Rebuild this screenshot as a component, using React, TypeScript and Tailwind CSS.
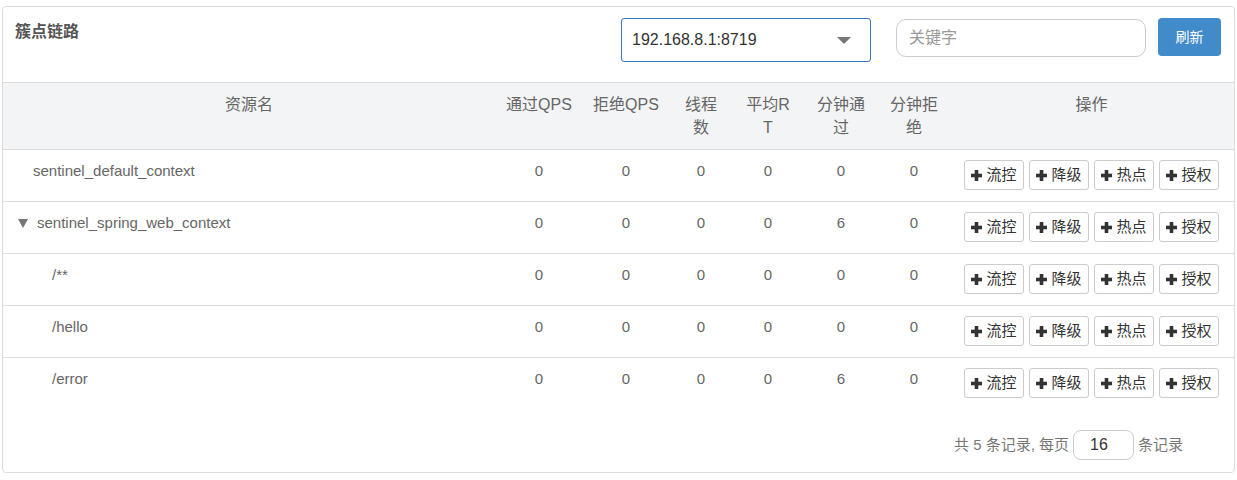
import React from 'react';

const font = { fontFamily: '"Liberation Sans", "Noto Sans CJK SC", sans-serif' };

const cols = 'grid grid-cols-[492px_88px_86px_64px_70px_76px_70px_1fr]';

type Node = {
  name: string;
  level: number;
  expandable?: boolean;
  stats: number[];
};

const rows: Node[] = [
  { name: 'sentinel_default_context', level: 0, stats: [0, 0, 0, 0, 0, 0] },
  { name: 'sentinel_spring_web_context', level: 0, expandable: true, stats: [0, 0, 0, 0, 6, 0] },
  { name: '/**', level: 1, stats: [0, 0, 0, 0, 0, 0] },
  { name: '/hello', level: 1, stats: [0, 0, 0, 0, 0, 0] },
  { name: '/error', level: 1, stats: [0, 0, 0, 0, 6, 0] },
];

const Plus = () => (
  <svg width="11" height="11" viewBox="0 0 11 11" className="shrink-0">
    <rect x="3.7" y="0" width="3.6" height="11" fill="#333" />
    <rect x="0" y="3.7" width="11" height="3.6" fill="#333" />
  </svg>
);

const ActionButton = ({ label }: { label: string }) => (
  <button className="flex h-[30px] w-[60px] items-center justify-center gap-[4px] rounded-[3px] border border-[#ccc] bg-white text-[15px] text-[#333]">
    <Plus />
    <span>{label}</span>
  </button>
);

const App = () => {
  return (
    <div className="min-h-[480px] bg-white pt-[6px]" style={font}>
      <div className="mx-[2px] rounded-[4px] border border-[#ddd] bg-white">
        {/* Toolbar */}
        <div className="flex h-[75px] items-start pl-[12px] pr-[13px]">
          <div className="mt-[14px] text-[16px] leading-[22px] font-semibold text-[#555]">簇点链路</div>
          <div className="ml-auto flex items-start">
            <div className="mt-[11px] flex h-[44px] w-[250px] items-center justify-between rounded-[3px] border border-[#3b7bc2] pl-[10px] pr-[19px] text-[16px] text-[#333]">
              <span>192.168.8.1:8719</span>
              <span className="h-0 w-0 border-x-[7px] border-t-[7px] border-x-transparent border-t-[#777]" />
            </div>
            <div className="ml-[25px] mt-[12px] flex h-[38px] w-[250px] items-center rounded-[10px] border border-[#ccc] pl-[12px] text-[16px] text-[#999]">
              关键字
            </div>
            <button className="ml-[12px] mt-[11px] h-[38px] w-[63px] rounded-[4px] bg-[#428bca] text-[14px] text-white">
              刷新
            </button>
          </div>
        </div>

        {/* Table header */}
        <div className={`${cols} border-y border-[#ddd] bg-[#f3f4f6] py-[10px] text-center text-[16px] leading-[23px] text-[#666]`}>
          <div>资源名</div>
          <div>通过QPS</div>
          <div>拒绝QPS</div>
          <div>线程<br />数</div>
          <div>平均R<br />T</div>
          <div>分钟通<br />过</div>
          <div>分钟拒<br />绝</div>
          <div>操作</div>
        </div>

        {/* Rows */}
        {rows.map((row, i) => (
          <div
            key={row.name}
            className={`${cols} text-[15px] leading-[22px] text-[#666] ${i > 0 ? 'border-t border-[#ddd]' : ''}`}
          >
            <div
              className={`flex items-start pt-[10px] pb-[11px] ${
                row.level === 1 ? 'pl-[49px]' : row.expandable ? 'pl-[15px]' : 'pl-[30px]'
              }`}
            >
              {row.expandable && (
                <span className="mr-[9px] mt-[7px] h-0 w-0 border-x-[5.5px] border-t-[9px] border-x-transparent border-t-[#777]" />
              )}
              <span>{row.name}</span>
            </div>
            {row.stats.map((s, j) => (
              <div key={j} className="pt-[10px] pb-[11px] text-center">
                {s}
              </div>
            ))}
            <div className="flex justify-center gap-[5px] pt-[10px] pb-[11px]">
              <ActionButton label="流控" />
              <ActionButton label="降级" />
              <ActionButton label="热点" />
              <ActionButton label="授权" />
            </div>
          </div>
        ))}

        {/* Footer */}
        <div className="flex items-center justify-end pb-[12px] pr-[51px] pt-[21px] text-[15px] text-[#777]">
          <span>共 5 条记录, 每页</span>
          <div className="mx-[4px] flex h-[30px] w-[61px] items-center rounded-[8px] border border-[#ccc] pl-[16px] text-[16px] text-[#333]">
            16
          </div>
          <span>条记录</span>
        </div>
      </div>
    </div>
  );
};

export default App;
